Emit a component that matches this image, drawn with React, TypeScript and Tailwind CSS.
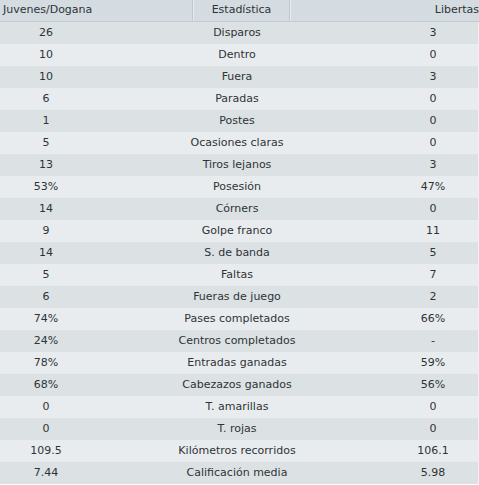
const rows: [string, string, string][] = [
  ["26", "Disparos", "3"],
  ["10", "Dentro", "0"],
  ["10", "Fuera", "3"],
  ["6", "Paradas", "0"],
  ["1", "Postes", "0"],
  ["5", "Ocasiones claras", "0"],
  ["13", "Tiros lejanos", "3"],
  ["53%", "Posesión", "47%"],
  ["14", "Córners", "0"],
  ["9", "Golpe franco", "11"],
  ["14", "S. de banda", "5"],
  ["5", "Faltas", "7"],
  ["6", "Fueras de juego", "2"],
  ["74%", "Pases completados", "66%"],
  ["24%", "Centros completados", "-"],
  ["78%", "Entradas ganadas", "59%"],
  ["68%", "Cabezazos ganados", "56%"],
  ["0", "T. amarillas", "0"],
  ["0", "T. rojas", "0"],
  ["109.5", "Kilómetros recorridos", "106.1"],
  ["7.44", "Calificación media", "5.98"],
];

export default function App() {
  return (
    <div
      className="w-[479px] h-[485px] bg-white overflow-hidden text-[11px] text-[#2e3436]"
      style={{ fontFamily: '"DejaVu Sans", sans-serif' }}
    >
      {/* header */}
      <div className="flex h-[22px] bg-[#d4dce2] border-b border-[#c3ccd3]">
        <div className="w-[193px] pl-[3px] flex items-center border-r border-[#bfc8cf]">
          Juvenes/Dogana
        </div>
        <div className="w-[97px] flex items-center justify-center border-l border-[#e6ecf0] border-r border-r-[#bfc8cf]">
          Estadística
        </div>
        <div className="flex-1 flex items-center justify-end border-l border-[#e6ecf0] whitespace-nowrap">
          Libertas
        </div>
      </div>

      {/* rows */}
      <div className="w-[479px]">
        {rows.map(([a, label, b], i) => (
          <div
            key={label}
            className={
              "grid grid-cols-[92px_1fr_92px] h-[22px] items-center border-r border-[#eef1f3] " +
              (i % 2 === 0 ? "bg-[#dce1e4]" : "bg-[#e9ecee]")
            }
          >
            <div className="text-center">{a}</div>
            <div className="text-center pr-[4px]">{label}</div>
            <div className="text-center pl-[2px]">{b}</div>
          </div>
        ))}
      </div>
    </div>
  );
}
